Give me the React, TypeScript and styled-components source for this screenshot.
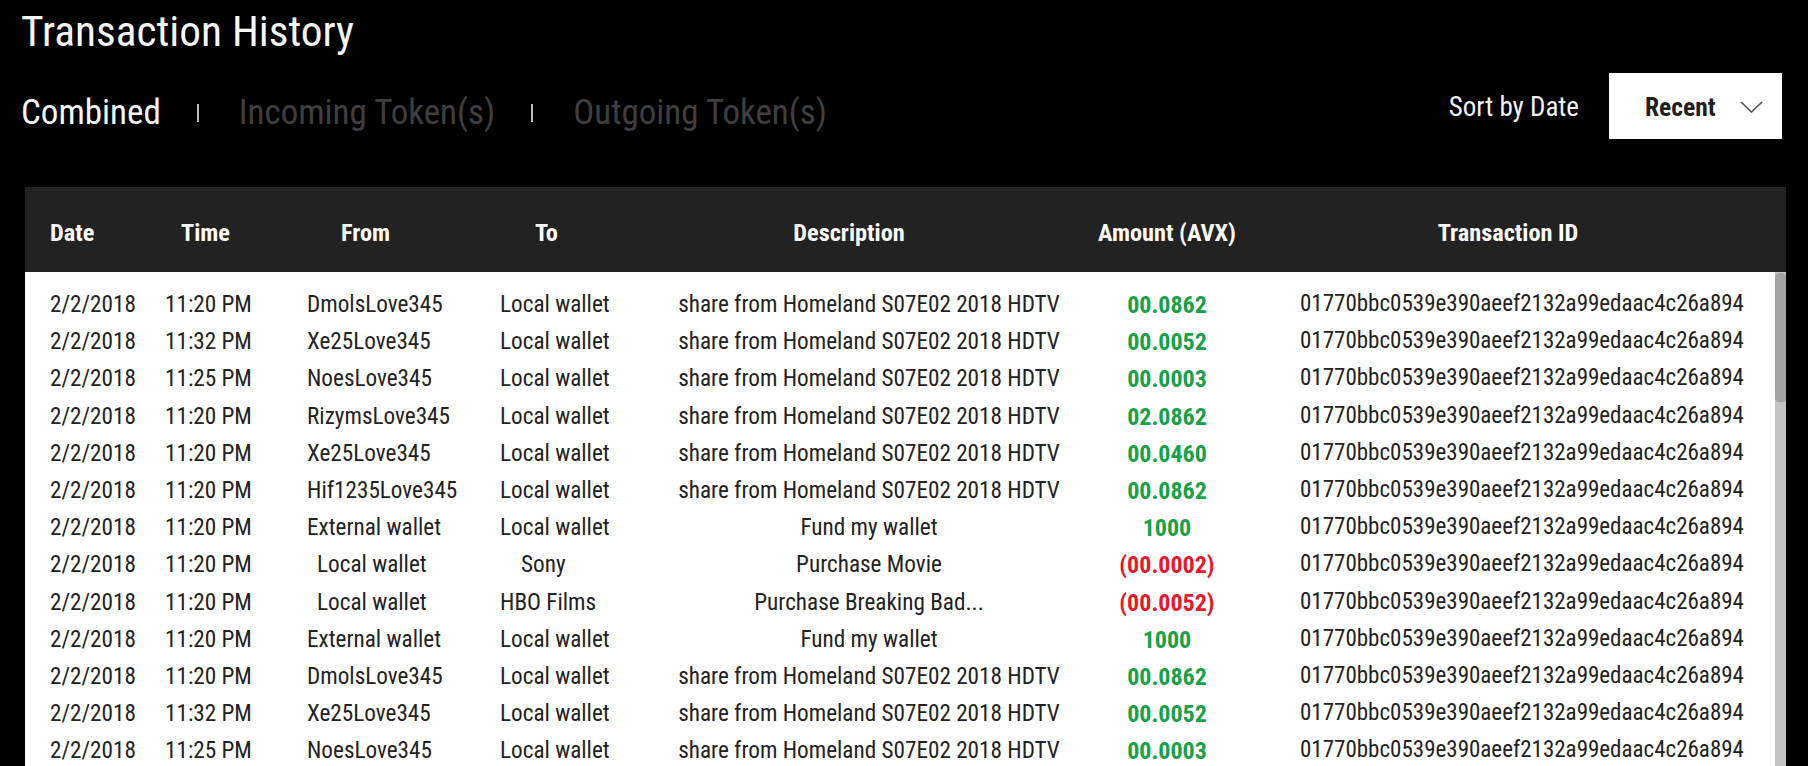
import React from "react";
import styled, { createGlobalStyle } from "styled-components";

const GlobalStyle = createGlobalStyle`
  html, body {
    margin: 0;
    padding: 0;
    height: 100%;
    background: #000;
    overflow: hidden;
  }
  body {
    font-family: Roboto, "Open Sans", sans-serif;
    font-stretch: 87.5%;
  }
  #root { height: 100%; }
`;

const Page = styled.div`
  height: 766px;
  display: flex;
  flex-direction: column;
  padding: 11px 22px 0 21px;
  box-sizing: border-box;
  overflow: hidden;
`;

const Title = styled.h1`
  margin: 0;
  font-size: 43.3px;
  line-height: 42px;
  font-weight: 400;
  color: #f7f7f7;
`;

const Toolbar = styled.div`
  display: flex;
  align-items: center;
  justify-content: space-between;
  height: 66px;
  margin-top: 20px;
`;

const Tabs = styled.div`
  display: flex;
  align-items: center;
  margin-top: 13px;
`;

const Tab = styled.span<{ $active?: boolean }>`
  font-size: 35px;
  line-height: 34px;
  color: ${(p) => (p.$active ? "#f7f7f7" : "#3f3f3f")};
`;

const Sep = styled.span`
  display: block;
  width: 2px;
  height: 18px;
  background: #bdbdbd;
  margin: 0 40px 0 36px;
`;

const SortGroup = styled.div`
  display: flex;
  align-items: center;
  gap: 30px;
  margin-right: 4px;
`;

const SortLabel = styled.span`
  font-size: 27px;
  line-height: 26px;
  color: #f2f2f2;
  padding-top: 2px;
`;

const Dropdown = styled.button`
  display: flex;
  align-items: center;
  justify-content: space-between;
  width: 173px;
  height: 66px;
  padding: 2px 19px 0 36px;
  box-sizing: border-box;
  border: none;
  background: #fff;
  font-family: inherit;
  font-stretch: inherit;
  font-size: 25.5px;
  font-weight: 700;
  color: #1e1e1e;
  cursor: pointer;
`;

const Table = styled.div`
  margin: 48px 0 0 4px;
  flex: 1;
  display: flex;
  flex-direction: column;
  min-height: 0;
`;

const cols = "115px 142px 193px 160px 418px 178px 1fr";

const HeaderRow = styled.div`
  display: grid;
  grid-template-columns: ${cols};
  align-items: center;
  height: 85px;
  padding: 6px 11px 0 25px;
  box-sizing: border-box;
  background: #222222;
`;

const HeadCell = styled.div<{ $align?: "left" | "center"; $pl?: number; $pr?: number }>`
  font-size: 24.3px;
  line-height: 24px;
  font-weight: 700;
  color: #fafafa;
  text-align: ${(p) => p.$align ?? "left"};
  padding-left: ${(p) => p.$pl ?? 0}px;
  padding-right: ${(p) => p.$pr ?? 0}px;
  white-space: nowrap;
`;

const BodyWrap = styled.div`
  flex: 1;
  display: flex;
  background: #fff;
  min-height: 0;
`;

const Rows = styled.div`
  flex: 1;
  display: flex;
  flex-direction: column;
  gap: 7.2px;
  padding: 17px 0 0 25px;
`;

const Row = styled.div`
  display: grid;
  grid-template-columns: ${cols};
  height: 30px;
  align-items: start;
`;

const Cell = styled.div<{ $align?: "left" | "center"; $pl?: number }>`
  font-size: 23.2px;
  line-height: 30px;
  color: #222;
  text-align: ${(p) => p.$align ?? "left"};
  padding-left: ${(p) => p.$pl ?? 0}px;
  white-space: nowrap;
`;

const TxIdCell = styled(Cell)`
  font-size: 23px;
`;

const Amount = styled.div<{ $negative?: boolean }>`
  font-size: 24px;
  line-height: 30px;
  height: 30px;
  box-sizing: border-box;
  font-weight: 700;
  text-align: center;
  padding-top: 1px;
  color: ${(p) => (p.$negative ? "#e5182c" : "#17a148")};
  white-space: nowrap;
`;

const ScrollTrack = styled.div`
  width: 11px;
  background: #c3c3c3;
  display: flex;
  flex-direction: column;
  padding-top: 1px;
`;

const ScrollThumb = styled.div`
  height: 129px;
  background: #a3a3a3;
  border-radius: 5px 5px 4px 4px;
`;

type Tx = {
  time: string;
  from: string;
  fromIndent?: number;
  to: string;
  toIndent?: number;
  desc: string;
  amount: string;
  negative?: boolean;
};

const SHARE = "share from Homeland S07E02 2018 HDTV";

const data: Tx[] = [
  { time: "11:20 PM", from: "DmolsLove345", to: "Local wallet", desc: SHARE, amount: "00.0862" },
  { time: "11:32 PM", from: "Xe25Love345", to: "Local wallet", desc: SHARE, amount: "00.0052" },
  { time: "11:25 PM", from: "NoesLove345", to: "Local wallet", desc: SHARE, amount: "00.0003" },
  { time: "11:20 PM", from: "RizymsLove345", to: "Local wallet", desc: SHARE, amount: "02.0862" },
  { time: "11:20 PM", from: "Xe25Love345", to: "Local wallet", desc: SHARE, amount: "00.0460" },
  { time: "11:20 PM", from: "Hif1235Love345", to: "Local wallet", desc: SHARE, amount: "00.0862" },
  { time: "11:20 PM", from: "External wallet", to: "Local wallet", desc: "Fund my wallet", amount: "1000" },
  { time: "11:20 PM", from: "Local wallet", fromIndent: 10, to: "Sony", toIndent: 21, desc: "Purchase Movie", amount: "(00.0002)", negative: true },
  { time: "11:20 PM", from: "Local wallet", fromIndent: 10, to: "HBO Films", desc: "Purchase Breaking Bad...", amount: "(00.0052)", negative: true },
  { time: "11:20 PM", from: "External wallet", to: "Local wallet", desc: "Fund my wallet", amount: "1000" },
  { time: "11:20 PM", from: "DmolsLove345", to: "Local wallet", desc: SHARE, amount: "00.0862" },
  { time: "11:32 PM", from: "Xe25Love345", to: "Local wallet", desc: SHARE, amount: "00.0052" },
  { time: "11:25 PM", from: "NoesLove345", to: "Local wallet", desc: SHARE, amount: "00.0003" },
];

const TX_ID = "01770bbc0539e390aeef2132a99edaac4c26a894";

const Chevron = () => (
  <svg width="23" height="12" viewBox="0 0 23 12" fill="none">
    <path d="M1 1 L11.5 11 L22 1" stroke="#555" strokeWidth="1.6" />
  </svg>
);

export default function App() {
  return (
    <>
      <GlobalStyle />
      <Page>
        <Title>Transaction History</Title>
        <Toolbar>
          <Tabs>
            <Tab $active>Combined</Tab>
            <Sep />
            <Tab>Incoming Token(s)</Tab>
            <Sep />
            <Tab>Outgoing Token(s)</Tab>
          </Tabs>
          <SortGroup>
            <SortLabel>Sort by Date</SortLabel>
            <Dropdown>
              Recent
              <Chevron />
            </Dropdown>
          </SortGroup>
        </Toolbar>
        <Table>
          <HeaderRow>
            <HeadCell>Date</HeadCell>
            <HeadCell $pl={16}>Time</HeadCell>
            <HeadCell $pl={34}>From</HeadCell>
            <HeadCell $pl={35}>To</HeadCell>
            <HeadCell $align="center" $pr={40}>Description</HeadCell>
            <HeadCell $align="center">Amount (AVX)</HeadCell>
            <HeadCell $align="center" $pr={15}>Transaction ID</HeadCell>
          </HeaderRow>
          <BodyWrap>
            <Rows>
              {data.map((tx, i) => (
                <Row key={i}>
                  <Cell>2/2/2018</Cell>
                  <Cell>{tx.time}</Cell>
                  <Cell $pl={tx.fromIndent}>{tx.from}</Cell>
                  <Cell $pl={tx.toIndent}>{tx.to}</Cell>
                  <Cell $align="center">{tx.desc}</Cell>
                  <Amount $negative={tx.negative}>{tx.amount}</Amount>
                  <TxIdCell $pl={44}>{TX_ID}</TxIdCell>
                </Row>
              ))}
            </Rows>
            <ScrollTrack>
              <ScrollThumb />
            </ScrollTrack>
          </BodyWrap>
        </Table>
      </Page>
    </>
  );
}
